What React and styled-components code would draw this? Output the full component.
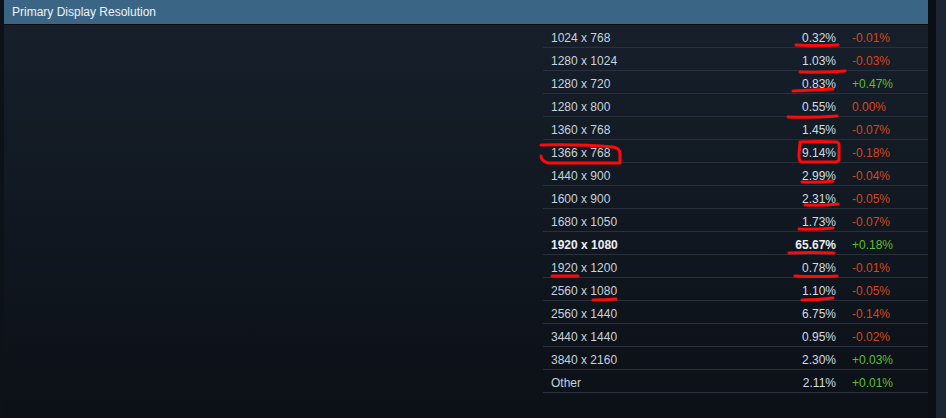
import React from "react";
import styled, { createGlobalStyle } from "styled-components";

const rows = [
  { res: "1024 x 768", pct: "0.32%", change: "-0.01%" },
  { res: "1280 x 1024", pct: "1.03%", change: "-0.03%" },
  { res: "1280 x 720", pct: "0.83%", change: "+0.47%" },
  { res: "1280 x 800", pct: "0.55%", change: "0.00%" },
  { res: "1360 x 768", pct: "1.45%", change: "-0.07%" },
  { res: "1366 x 768", pct: "9.14%", change: "-0.18%" },
  { res: "1440 x 900", pct: "2.99%", change: "-0.04%" },
  { res: "1600 x 900", pct: "2.31%", change: "-0.05%" },
  { res: "1680 x 1050", pct: "1.73%", change: "-0.07%" },
  { res: "1920 x 1080", pct: "65.67%", change: "+0.18%", bold: true },
  { res: "1920 x 1200", pct: "0.78%", change: "-0.01%" },
  { res: "2560 x 1080", pct: "1.10%", change: "-0.05%" },
  { res: "2560 x 1440", pct: "6.75%", change: "-0.14%" },
  { res: "3440 x 1440", pct: "0.95%", change: "-0.02%" },
  { res: "3840 x 2160", pct: "2.30%", change: "+0.03%" },
  { res: "Other", pct: "2.11%", change: "+0.01%" },
];

// hand drawn red marks someone put over the screenshot
const marks = [
  "M796 45 Q817 46 838 45",
  "M800 72 Q822 73 845 71",
  "M793 91 Q813 90 833 89",
  "M788 117 Q812 118 837 116",
  "M541 145 Q580 144 613 147 Q620 148 620 154 L620 163 L548 163 Q541 161 541 156",
  "M800 142 Q818 141 837 142 Q840 143 839 150 L839 160 Q838 162 834 162 L801 162 Q799 161 799 155 Z",
  "M802 182 Q818 183 833 181",
  "M805 205 Q821 206 838 204",
  "M799 229 Q816 230 833 228",
  "M789 253 Q811 252 834 253",
  "M552 276 Q565 276 578 276",
  "M795 276 Q816 277 837 276",
  "M593 300 Q604 300 616 299",
  "M802 300 Q818 300 833 298",
];

const GlobalStyle = createGlobalStyle`
  body {
    margin: 0;
    background: #0d1219;
    font-family: "Liberation Sans", Arial, sans-serif;
  }
`;

const Page = styled.div`
  position: relative;
  display: flex;
  width: 946px;
  height: 418px;
  overflow: hidden;
`;

const EdgeStrip = styled.div`
  width: ${(p) => p.width}px;
  flex-shrink: 0;
  background: ${(p) => p.color};
`;

const Panel = styled.section`
  width: 924px;
  flex-shrink: 0;
  display: flex;
  flex-direction: column;
  background: linear-gradient(180deg, #17202c 0%, #111821 50%, #0c1017 100%);
`;

const Header = styled.div`
  height: 24px;
  padding-left: 8px;
  display: flex;
  align-items: center;
  background: #3b6585;
  border-bottom: 1px solid #090c11;
  color: #eef3f7;
  font-size: 12px;
`;

const Body = styled.div`
  display: flex;
  justify-content: flex-end;
`;

const Table = styled.div`
  width: 385px;
  display: flex;
  flex-direction: column;
`;

const Row = styled.div`
  height: 19px;
  padding-top: 3px;
  display: flex;
  align-items: center;
  padding-left: 8px;
  border-bottom: 1px solid #29313c;
  font-size: 12px;
  color: #c7d3dd;
  font-weight: ${(p) => (p.bold ? "bold" : "normal")};
`;

const Res = styled.span`
  flex: 1;
  color: ${(p) => (p.bold ? "#e9eef2" : "#c7d3dd")};
`;

const Pct = styled.span`
  width: 70px;
  text-align: right;
  color: ${(p) => (p.bold ? "#e9eef2" : "#d2dde5")};
`;

const Change = styled.span`
  width: 76px;
  margin-left: 16px;
  font-weight: normal;
  color: ${(p) => (p.up ? "#5fbf2a" : "#d8461f")};
`;

const Marks = styled.svg`
  position: absolute;
  left: 0;
  top: 0;
  pointer-events: none;
`;

export default function App() {
  return (
    <>
      <GlobalStyle />
      <Page>
        <EdgeStrip width={4} color="#0d1219" />
        <Panel>
          <Header>Primary Display Resolution</Header>
          <Body>
            <Table>
              {rows.map((r) => (
                <Row key={r.res} bold={r.bold}>
                  <Res bold={r.bold}>{r.res}</Res>
                  <Pct bold={r.bold}>{r.pct}</Pct>
                  <Change up={r.change.startsWith("+")}>{r.change}</Change>
                </Row>
              ))}
            </Table>
          </Body>
        </Panel>
        <EdgeStrip width={8} color="#0b0f15" />
        <EdgeStrip width={10} color="#1b2534" />
        <Marks width="946" height="418">
          {marks.map((d, i) => (
            <path
              key={i}
              d={d}
              fill="none"
              stroke="#ff0a0a"
              strokeWidth="3"
              strokeLinecap="round"
              strokeLinejoin="round"
            />
          ))}
        </Marks>
      </Page>
    </>
  );
}
